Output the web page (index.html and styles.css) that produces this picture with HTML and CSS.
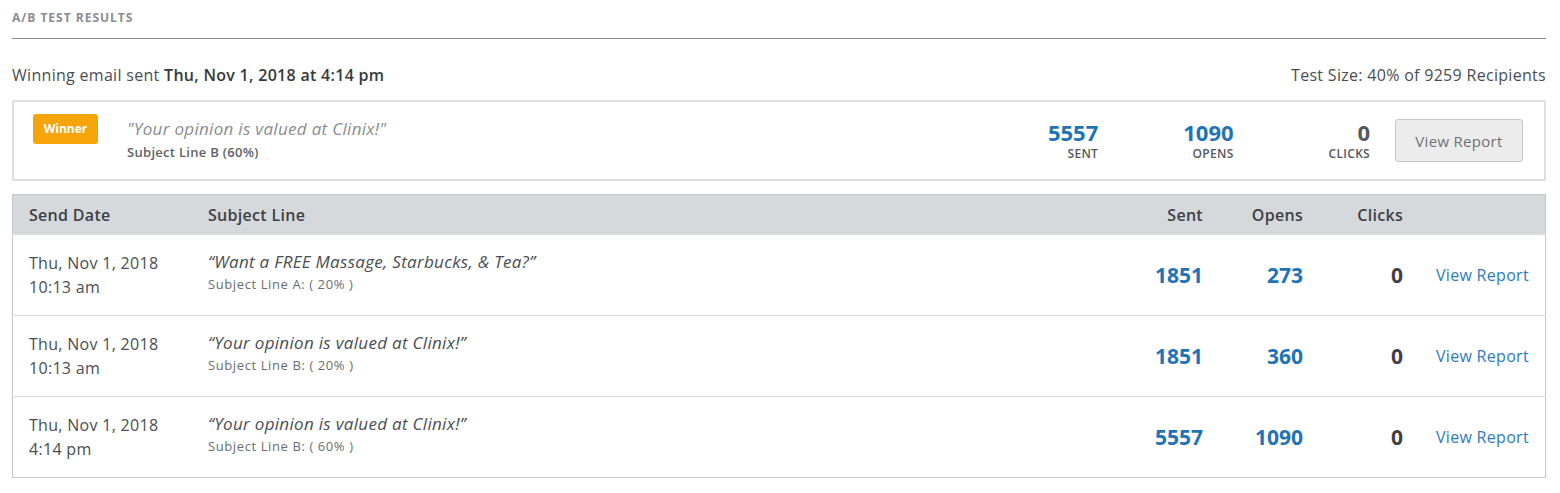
FILE: index.html
```html
<!DOCTYPE html>
<html lang="en">
<head>
    <meta charset="UTF-8">
    <title>A/B Test Results</title>
    <link rel="stylesheet" href="styles.css">
</head>
<body>
    <div class="page">
        <h2 class="section-title">A/B Test Results</h2>

        <div class="summary">
            <div>Winning email sent <strong>Thu, Nov 1, 2018 at 4:14 pm</strong></div>
            <div>Test Size: 40% of 9259 Recipients</div>
        </div>

        <div class="winner-card">
            <span class="badge">Winner</span>
            <div class="winner-subject">
                <div class="quote">"Your opinion is valued at Clinix!"</div>
                <div class="winner-label">Subject Line B (60%)</div>
            </div>
            <div class="stat stat-sent">
                <div class="stat-num">5557</div>
                <div class="stat-label">Sent</div>
            </div>
            <div class="stat stat-opens">
                <div class="stat-num">1090</div>
                <div class="stat-label">Opens</div>
            </div>
            <div class="stat stat-clicks">
                <div class="stat-num zero">0</div>
                <div class="stat-label">Clicks</div>
            </div>
            <button class="report-btn">View Report</button>
        </div>

        <table class="results">
            <thead>
                <tr>
                    <th class="col-date">Send Date</th>
                    <th class="col-subject">Subject Line</th>
                    <th class="col-num col-sent">Sent</th>
                    <th class="col-num">Opens</th>
                    <th class="col-num">Clicks</th>
                    <th class="col-link"></th>
                </tr>
            </thead>
            <tbody>
                <tr>
                    <td class="col-date">Thu, Nov 1, 2018<br>10:13 am</td>
                    <td class="col-subject">
                        <div class="row-quote">“Want a FREE Massage, Starbucks, &amp; Tea?”</div>
                        <div class="row-label">Subject Line A: ( 20% )</div>
                    </td>
                    <td class="col-num num">1851</td>
                    <td class="col-num num">273</td>
                    <td class="col-num num zero">0</td>
                    <td class="col-link"><a href="#">View Report</a></td>
                </tr>
                <tr>
                    <td class="col-date">Thu, Nov 1, 2018<br>10:13 am</td>
                    <td class="col-subject">
                        <div class="row-quote">“Your opinion is valued at Clinix!”</div>
                        <div class="row-label">Subject Line B: ( 20% )</div>
                    </td>
                    <td class="col-num num">1851</td>
                    <td class="col-num num">360</td>
                    <td class="col-num num zero">0</td>
                    <td class="col-link"><a href="#">View Report</a></td>
                </tr>
                <tr>
                    <td class="col-date">Thu, Nov 1, 2018<br>4:14 pm</td>
                    <td class="col-subject">
                        <div class="row-quote">“Your opinion is valued at Clinix!”</div>
                        <div class="row-label">Subject Line B: ( 60% )</div>
                    </td>
                    <td class="col-num num">5557</td>
                    <td class="col-num num">1090</td>
                    <td class="col-num num zero">0</td>
                    <td class="col-link"><a href="#">View Report</a></td>
                </tr>
            </tbody>
        </table>
    </div>
</body>
</html>
```

FILE: styles.css
```css
body {
    margin: 0;
    background-color: #fff;
    color: #3d4147;
    font-family: "Open Sans", sans-serif;
    letter-spacing: 0.3px;
}
.page {
    padding: 0 14px 0 12px;
}
.section-title {
    margin: 0;
    padding: 9px 0 12px;
    font-size: 12px;
    font-weight: 700;
    letter-spacing: 1px;
    text-transform: uppercase;
    color: #8a8d91;
    border-bottom: 1px solid #8c8c8c;
}
.summary {
    display: flex;
    justify-content: space-between;
    align-items: center;
    padding: 25px 0 14px;
    font-size: 16px;
    color: #4a4e54;
}
.summary strong {
    color: #363a40;
    font-weight: 600;
}
.winner-card {
    display: flex;
    align-items: center;
    height: 77px;
    border: 2px solid #dedede;
    border-radius: 2px;
    padding: 0 21px 0 19px;
}
.badge {
    align-self: flex-start;
    margin-top: 12px;
    width: 65px;
    height: 30px;
    line-height: 30px;
    text-align: center;
    background-color: #f5a50a;
    border-radius: 3px;
    color: #fff;
    font-size: 12px;
    font-weight: 700;
    letter-spacing: 0;
}
.winner-subject {
    flex: 1;
    margin-left: 29px;
    margin-top: -3px;
}
.quote {
    font-size: 17px;
    font-style: italic;
    color: #8a8d91;
    line-height: 22px;
}
.winner-label {
    margin-top: 3px;
    font-size: 13px;
    font-weight: 600;
    color: #5e6268;
}
.stat {
    text-align: right;
}
.stat-num {
    font-size: 22px;
    font-weight: 700;
    color: #1f73b7;
    line-height: 24px;
    letter-spacing: 0;
}
.stat-num.zero {
    color: #55595f;
}
.stat-label {
    font-size: 12px;
    font-weight: 600;
    text-transform: uppercase;
    color: #55595f;
    margin-top: 1px;
}
.stat-opens {
    margin-left: 85px;
}
.stat-clicks {
    margin-left: 95px;
}
.report-btn {
    margin-left: 25px;
    width: 128px;
    height: 43px;
    background-color: #ececec;
    border: 1px solid #c8c8c8;
    border-radius: 3px;
    color: #6e7277;
    font-family: "Open Sans", sans-serif;
    font-size: 15px;
    letter-spacing: 0.3px;
    cursor: pointer;
}
.results {
    width: 100%;
    margin-top: 13px;
    border-collapse: collapse;
    border: 1px solid #c6c8ca;
    box-shadow: 0 1px 1px rgba(0, 0, 0, 0.12);
}
.results th {
    height: 39px;
    padding: 0;
    background-color: #d6d9dc;
    font-size: 16px;
    font-weight: 600;
    color: #3d4147;
    text-align: left;
}
.results td {
    height: 80px;
    padding: 0;
    border-top: 1px solid #dcdcdc;
    font-size: 16px;
    color: #4a4e54;
    line-height: 24px;
}
.results th.col-date,
.results td.col-date {
    width: 179px;
    padding-left: 16px;
}
.results td.col-subject {
    height: 76px;
    padding-bottom: 4px;
}
.results th.col-num,
.results td.col-num {
    width: 100px;
    text-align: right;
}
.results th.col-sent {
    width: auto;
}
.row-quote {
    font-size: 17px;
    font-style: italic;
    color: #4a4e54;
    line-height: 22px;
}
.row-label {
    font-size: 13px;
    letter-spacing: 0.6px;
    color: #6a6e73;
    line-height: 22px;
}
.results td.num {
    font-size: 21px;
    font-weight: 700;
    color: #1f73b7;
    letter-spacing: 0;
}
.results td.zero {
    color: #3d4147;
}
.results th.col-link,
.results td.col-link {
    width: 109px;
    padding-left: 33px;
}
.col-link a {
    color: #2e7bbf;
    text-decoration: none;
    font-size: 16px;
}
```
